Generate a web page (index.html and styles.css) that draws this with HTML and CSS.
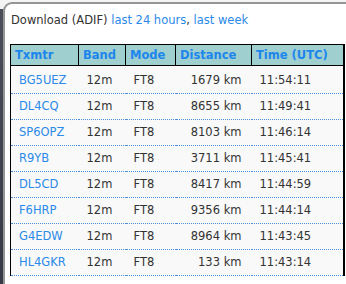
FILE: index.html
```html
<!DOCTYPE html>
<html>
<head>
<meta charset="utf-8">
<link rel="stylesheet" href="styles.css">
</head>
<body>
<div class="page">
  <div class="strip"></div>
  <div class="panel">
    <p class="title">Download (ADIF) <a href="#">last 24 hours</a>, <a href="#">last week</a></p>
    <table class="spots">
      <colgroup>
        <col class="c1"><col class="c2"><col class="c3"><col class="c4"><col class="c5">
      </colgroup>
      <thead>
        <tr><th>Txmtr</th><th>Band</th><th>Mode</th><th>Distance</th><th>Time (UTC)</th></tr>
      </thead>
      <tbody>
        <tr><td><a href="#">BG5UEZ</a></td><td>12m</td><td>FT8</td><td class="num">1679 km</td><td>11:54:11</td></tr>
        <tr><td><a href="#">DL4CQ</a></td><td>12m</td><td>FT8</td><td class="num">8655 km</td><td>11:49:41</td></tr>
        <tr><td><a href="#">SP6OPZ</a></td><td>12m</td><td>FT8</td><td class="num">8103 km</td><td>11:46:14</td></tr>
        <tr><td><a href="#">R9YB</a></td><td>12m</td><td>FT8</td><td class="num">3711 km</td><td>11:45:41</td></tr>
        <tr><td><a href="#">DL5CD</a></td><td>12m</td><td>FT8</td><td class="num">8417 km</td><td>11:44:59</td></tr>
        <tr><td><a href="#">F6HRP</a></td><td>12m</td><td>FT8</td><td class="num">9356 km</td><td>11:44:14</td></tr>
        <tr><td><a href="#">G4EDW</a></td><td>12m</td><td>FT8</td><td class="num">8964 km</td><td>11:43:45</td></tr>
        <tr><td><a href="#">HL4GKR</a></td><td>12m</td><td>FT8</td><td class="num">133 km</td><td>11:43:14</td></tr>
      </tbody>
    </table>
  </div>
</div>
</body>
</html>
```
FILE: styles.css
```css
html, body {
  margin: 0;
  padding: 0;
  background: #f4f4f4;
  overflow: hidden;
}
.page {
  display: flex;
  height: 284px;
  font-family: "DejaVu Sans", Verdana, sans-serif;
  font-size: 11.5px;
  color: #333;
}
.strip {
  width: 3px;
  margin-top: 9px;
  background: linear-gradient(#4a4f59, #353a44);
  flex: none;
}
.panel {
  flex: 1;
  margin-top: 2px;
  border-top: 2px solid #959595;
  border-left: 2px solid #959595;
  border-top-left-radius: 9px;
  background: #fff;
  padding: 8px 0 0 5px;
}
.title {
  margin: 0 0 16px 1px;
  line-height: 16px;
}
a {
  color: #2b8ae8;
  text-decoration: none;
}
.spots {
  border-collapse: collapse;
  table-layout: fixed;
  width: 333px;
  border-left: 1px solid #000;
  border-right: 2px solid #000;
}
.c1 { width: 68px; }
.c2 { width: 47px; }
.c3 { width: 50px; }
.c4 { width: 76px; }
.c5 { width: 92px; }
.spots th {
  background: #9fcfcf;
  color: #1c86ec;
  font-weight: bold;
  text-align: left;
  border: 1px solid #000;
  padding: 3px 4px 2px 4px;
  line-height: 15px;
  white-space: nowrap;
}
.spots td {
  background: #f9f9f9;
  border-bottom: 1px dotted #4a8fd8;
  padding: 5px 8px 5px 8px;
  line-height: 15px;
  white-space: nowrap;
}
.spots tbody tr:first-child td {
  padding-top: 7px;
}
.spots td.num {
  text-align: right;
  padding-right: 10px;
}
```
